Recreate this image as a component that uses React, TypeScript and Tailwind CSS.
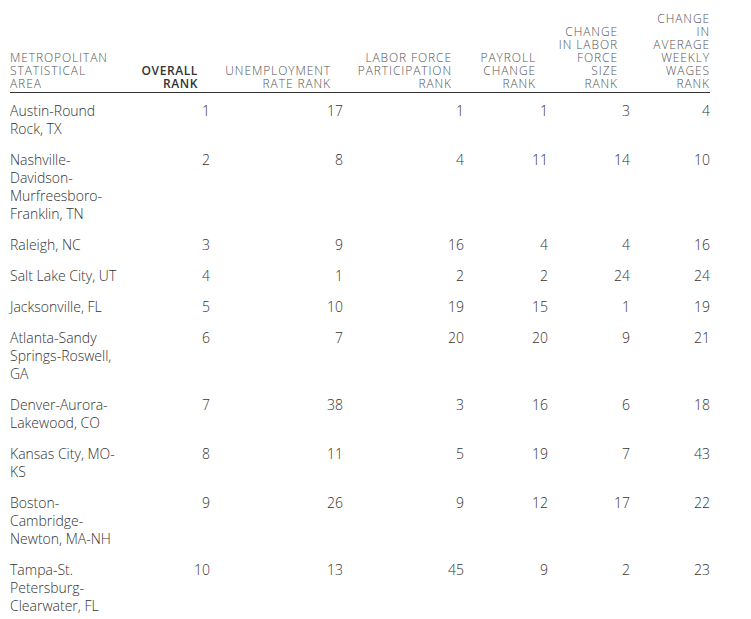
const headers: { lines: string[]; bold?: boolean }[] = [
  { lines: ["METROPOLITAN", "STATISTICAL", "AREA"] },
  { lines: ["OVERALL", "RANK"], bold: true },
  { lines: ["UNEMPLOYMENT", "RATE RANK"] },
  { lines: ["LABOR FORCE", "PARTICIPATION", "RANK"] },
  { lines: ["PAYROLL", "CHANGE", "RANK"] },
  { lines: ["CHANGE", "IN LABOR", "FORCE", "SIZE", "RANK"] },
  { lines: ["CHANGE", "IN", "AVERAGE", "WEEKLY", "WAGES", "RANK"] },
]

const rows: { area: string[]; ranks: number[] }[] = [
  { area: ["Austin-Round", "Rock, TX"], ranks: [1, 17, 1, 1, 3, 4] },
  { area: ["Nashville-", "Davidson-", "Murfreesboro-", "Franklin, TN"], ranks: [2, 8, 4, 11, 14, 10] },
  { area: ["Raleigh, NC"], ranks: [3, 9, 16, 4, 4, 16] },
  { area: ["Salt Lake City, UT"], ranks: [4, 1, 2, 2, 24, 24] },
  { area: ["Jacksonville, FL"], ranks: [5, 10, 19, 15, 1, 19] },
  { area: ["Atlanta-Sandy", "Springs-Roswell,", "GA"], ranks: [6, 7, 20, 20, 9, 21] },
  { area: ["Denver-Aurora-", "Lakewood, CO"], ranks: [7, 38, 3, 16, 6, 18] },
  { area: ["Kansas City, MO-", "KS"], ranks: [8, 11, 5, 19, 7, 43] },
  { area: ["Boston-", "Cambridge-", "Newton, MA-NH"], ranks: [9, 26, 9, 12, 17, 22] },
  { area: ["Tampa-St.", "Petersburg-", "Clearwater, FL"], ranks: [10, 13, 45, 9, 2, 23] },
]

const cols = "grid grid-cols-[130px_70px_133px_121px_84px_82px_80px]"

export default function App() {
  return (
    <div className="min-h-screen bg-white pl-[10px] pt-[12px] font-['Open_Sans',sans-serif]">
      <div className="w-[700px]">
        {/* column heads */}
        <div className={`${cols} items-end border-b border-[#333] pb-[2px]`}>
          {headers.map((h, i) => (
            <div
              key={i}
              className={
                "text-[12px] leading-[13px] " +
                (i === 0 ? "text-left " : "text-right ") +
                (i > 0 && i < 6 ? "pr-3 " : "") +
                (h.bold
                  ? "font-semibold tracking-[0.6px] text-[#333]"
                  : "font-light tracking-[0.9px] text-[#555]")
              }
            >
              {h.lines.map((l) => (
                <div key={l}>{l}</div>
              ))}
            </div>
          ))}
        </div>

        {/* body */}
        {rows.map((r) => (
          <div
            key={r.area[0]}
            className={`${cols} pt-[9px] pb-[4px] text-[14px] font-light leading-[18px] text-[#333]`}
          >
            <div>
              {r.area.map((l) => (
                <div key={l}>{l}</div>
              ))}
            </div>
            {r.ranks.map((n, i) => (
              <div key={i} className="text-right">
                {n}
              </div>
            ))}
          </div>
        ))}
      </div>
    </div>
  )
}
